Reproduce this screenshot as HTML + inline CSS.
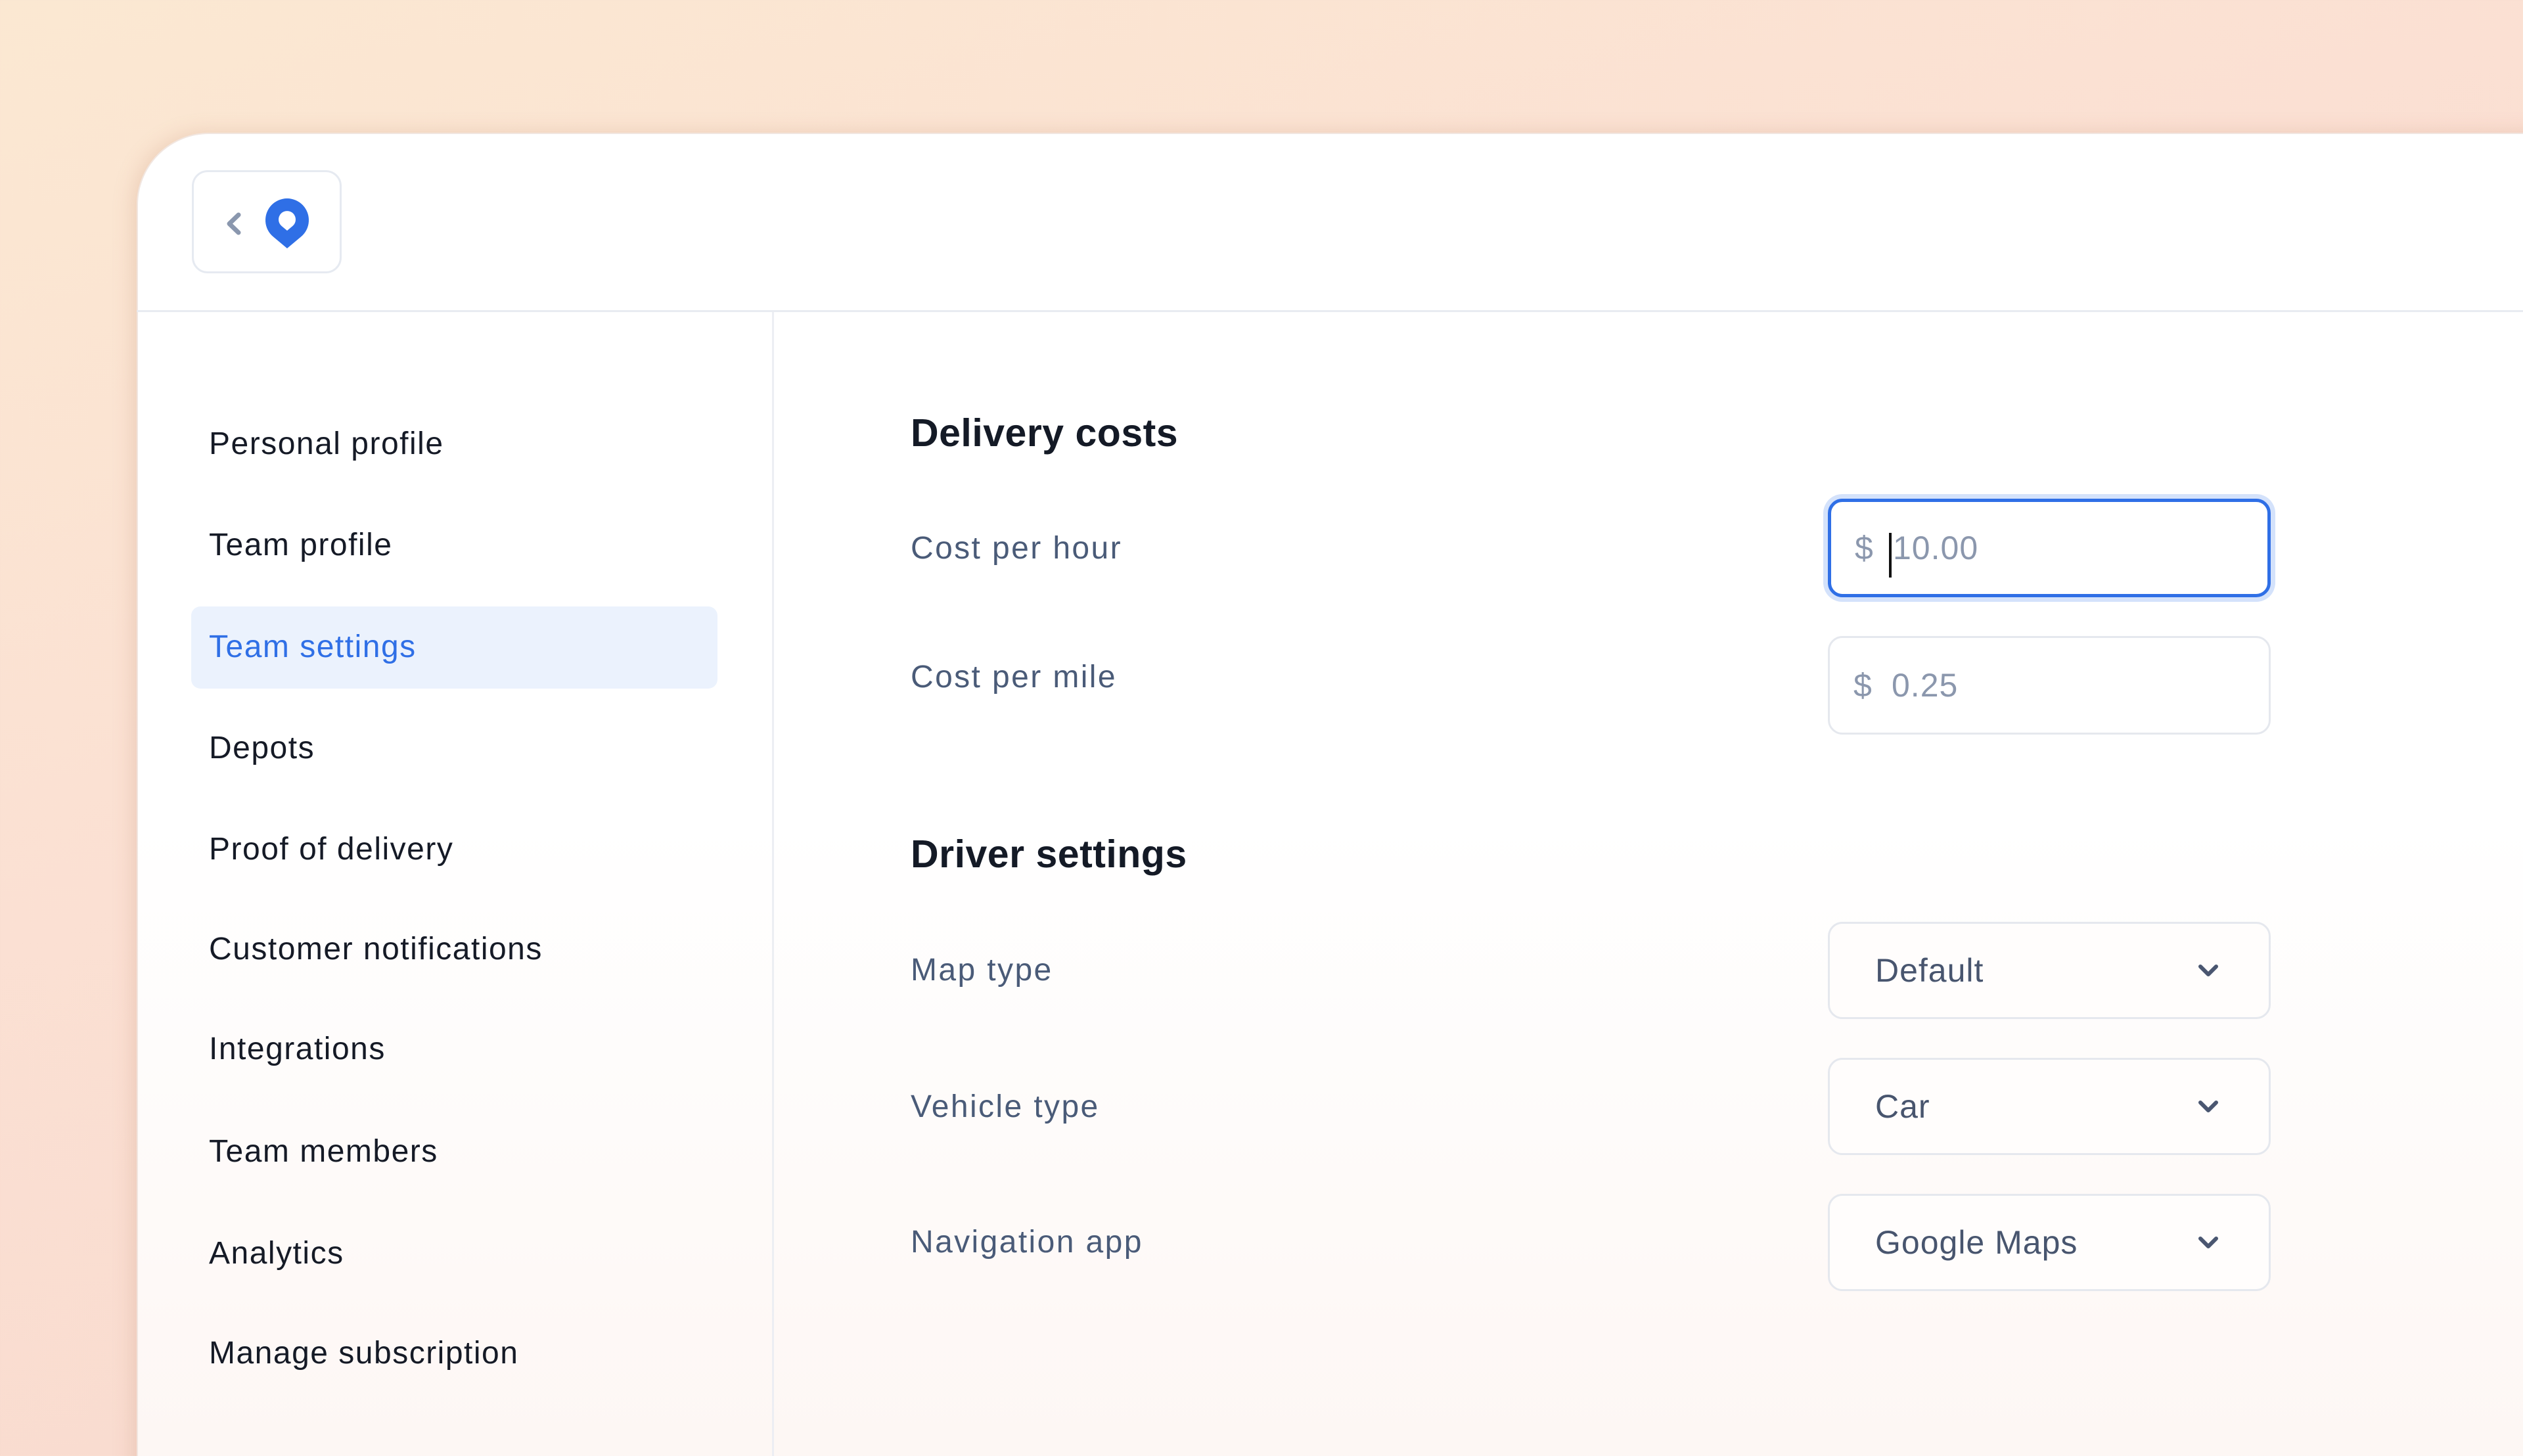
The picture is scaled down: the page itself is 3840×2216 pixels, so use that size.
<!DOCTYPE html>
<html><head><meta charset="utf-8"><style>
*{margin:0;padding:0;box-sizing:border-box}
html,body{width:3840px;height:2216px;overflow:hidden}
body{background:linear-gradient(160deg,#fbe8d2 0%,#fbe0d3 40%,#f6d6cb 100%);font-family:"Liberation Sans",sans-serif;position:relative}
.card{position:absolute;left:208px;top:202px;width:3700px;height:2100px;border-radius:110px 0 0 0;background:linear-gradient(180deg,#ffffff 0%,#ffffff 50%,#fdf6f3 100%);box-shadow:-6px 0 30px rgba(200,140,110,.25);border:2px solid #f1e6e0}
.logo{position:absolute;left:292px;top:259px;width:228px;height:157px;border:3px solid #e6eaf1;border-radius:24px;background:#fff}
.hline{position:absolute;left:208px;top:472px;width:3640px;height:3px;background:#e8ebf1}
.vline{position:absolute;left:1175px;top:475px;width:3px;height:1760px;background:#eceef3}
.nav{position:absolute;left:318px;font-size:48px;color:#151a26;line-height:60px;letter-spacing:1.5px}
.active{position:absolute;left:291px;top:923px;width:801px;height:125px;border-radius:14px;background:#ebf2fd}
h2{position:absolute;left:1386px;font-size:59px;font-weight:600;color:#141a26;line-height:76px;letter-spacing:0.5px}
.lbl{position:absolute;left:1386px;font-size:48px;color:#4a5b78;line-height:60px;letter-spacing:2.4px}
.inp{position:absolute;left:2782px;width:674px;height:150px;border:3px solid #e5e8ee;border-radius:22px;background:#fff;font-size:50px;color:#8b97ad;line-height:144px;letter-spacing:1px}
.inp .d{position:absolute;left:36px}
.inp .v{position:absolute;left:94px}
.focus{border:5px solid #2f6fe6;box-shadow:0 0 0 7px #d4e2fb;line-height:140px}
.sel{position:absolute;left:2782px;width:674px;height:148px;border:3px solid #e5e8ee;border-radius:22px;background:#fffdfc;font-size:50px;color:#48556e;line-height:142px;letter-spacing:1px}
.sel span{position:absolute;left:69px}
.sel svg{position:absolute;left:558px;top:60px}
</style></head><body>
<div class="card"></div>
<div class="logo">
<svg width="228" height="157" viewBox="0 0 228 157" style="position:absolute;left:-3px;top:-3px">
<polyline points="71,68 57,81.5 71,95" fill="none" stroke="#8a97ae" stroke-width="7" stroke-linecap="round" stroke-linejoin="round"/>
<path d="M145,119 L123.8,101.3 A33,33 0 1 1 166.2,101.3 Z" fill="#2f6fe6"/>
<path d="M145,92 L136.6,85 A13,13 0 1 1 153.4,85 Z" fill="#fff"/>
</svg>
</div>
<div class="hline"></div>
<div class="vline"></div>
<div class="active"></div>
<div class="nav" style="top:646px">Personal profile</div>
<div class="nav" style="top:800px">Team profile</div>
<div class="nav" style="top:955px;color:#2f6fe6">Team settings</div>
<div class="nav" style="top:1109px">Depots</div>
<div class="nav" style="top:1263px">Proof of delivery</div>
<div class="nav" style="top:1415px">Customer notifications</div>
<div class="nav" style="top:1567px">Integrations</div>
<div class="nav" style="top:1723px">Team members</div>
<div class="nav" style="top:1878px">Analytics</div>
<div class="nav" style="top:2030px">Manage subscription</div>

<h2 style="top:621px">Delivery costs</h2>
<div class="lbl" style="top:805px">Cost per hour</div>
<div class="lbl" style="top:1001px">Cost per mile</div>
<h2 style="top:1262px">Driver settings</h2>
<div class="lbl" style="top:1447px">Map type</div>
<div class="lbl" style="top:1655px">Vehicle type</div>
<div class="lbl" style="top:1861px">Navigation app</div>

<div class="inp focus" style="top:759px"><span class="d">$</span><span style="position:absolute;left:88px;top:47px;width:4px;height:68px;background:#111"></span><span class="v">10.00</span></div>
<div class="inp" style="top:968px"><span class="d">$</span><span class="v">0.25</span></div>

<div class="sel" style="top:1403px"><span>Default</span><svg width="36" height="24" viewBox="0 0 36 24"><polyline points="6,5 18,17 30,5" fill="none" stroke="#4a5670" stroke-width="6" stroke-linecap="round" stroke-linejoin="round"/></svg></div>
<div class="sel" style="top:1610px"><span>Car</span><svg width="36" height="24" viewBox="0 0 36 24"><polyline points="6,5 18,17 30,5" fill="none" stroke="#4a5670" stroke-width="6" stroke-linecap="round" stroke-linejoin="round"/></svg></div>
<div class="sel" style="top:1817px"><span>Google Maps</span><svg width="36" height="24" viewBox="0 0 36 24"><polyline points="6,5 18,17 30,5" fill="none" stroke="#4a5670" stroke-width="6" stroke-linecap="round" stroke-linejoin="round"/></svg></div>
</body></html>
